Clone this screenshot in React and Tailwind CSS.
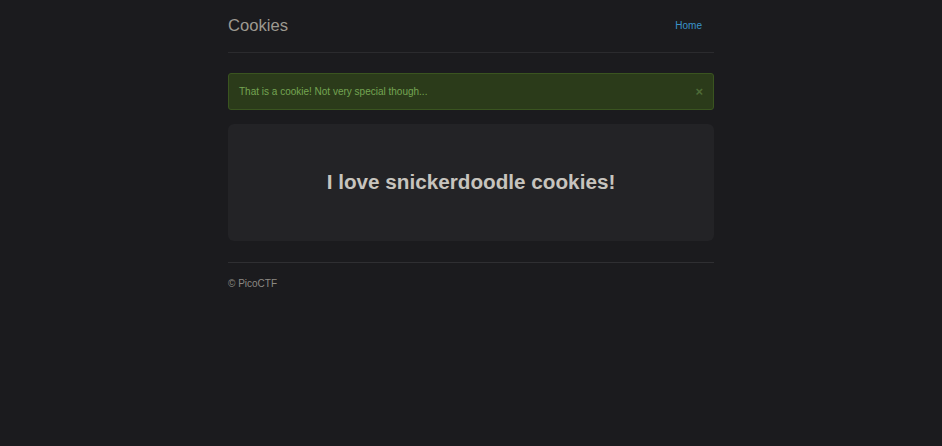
import React from 'react';

export default function App() {
  return (
    <div className="min-h-[446px] bg-[#1b1b1e] font-['Liberation_Sans',Arial,sans-serif]">
      <div className="mx-auto w-[486px]">
        {/* Header */}
        <div className="flex h-[53px] items-center justify-between border-b border-[#2b2b2e]">
          <h3 className="text-[16.6px] leading-none text-[#9d9990]">Cookies</h3>
          <a href="#" className="pr-[12px] text-[10px] leading-none text-[#3a93c9]">
            Home
          </a>
        </div>

        {/* Alert */}
        <div className="mt-[20px] flex h-[37px] items-center justify-between rounded-[3px] border border-[#3a5420] bg-[#2b3b1a] pl-[10px] pr-[10px]">
          <span className="text-[10px] leading-none text-[#74a552]">
            That is a cookie! Not very special though...
          </span>
          <span className="text-[13px] font-bold leading-none text-[#4e6b37]">×</span>
        </div>

        {/* Jumbotron */}
        <div className="mt-[14px] flex h-[117px] items-center justify-center rounded-[6px] bg-[#232326]">
          <h1 className="text-[20.7px] font-bold leading-none text-[#c7c4be]">
            I love snickerdoodle cookies!
          </h1>
        </div>

        {/* Footer */}
        <div className="mt-[21px] border-t border-[#2f2f32] pt-[16px]">
          <p className="text-[10px] leading-none text-[#8c8983]">© PicoCTF</p>
        </div>
      </div>
    </div>
  );
}
